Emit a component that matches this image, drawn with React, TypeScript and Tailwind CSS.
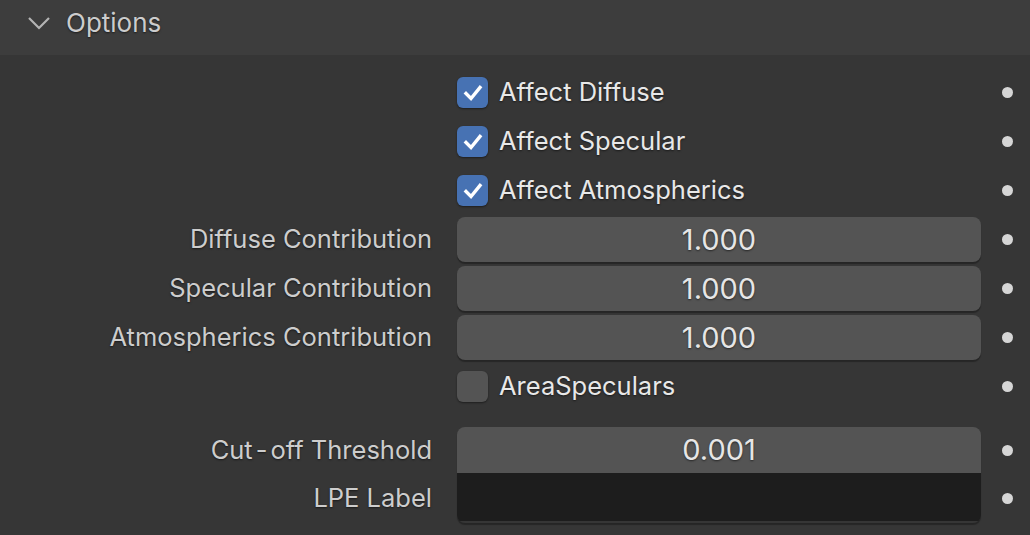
import React from "react";

const ts = "[text-shadow:0_1px_2px_rgba(0,0,0,0.55)]";

function Dot() {
  return (
    <div className="flex-1 flex items-center">
      <div className="ml-[21px] w-[11px] h-[11px] rounded-full bg-[#d6d6d6]" />
    </div>
  );
}

function CheckRow({ label, checked }: { label: string; checked: boolean }) {
  return (
    <div className="flex h-[49px] items-center">
      <div className="w-[432px]" />
      <div className="ml-[25px] w-[524px] flex items-center">
        <div
          className={
            checked
              ? "w-[31px] h-[31px] rounded-[6px] bg-[#4772b3] flex items-center justify-center shadow-[0_1px_2px_rgba(0,0,0,0.45)]"
              : "w-[31px] h-[31px] rounded-[6px] bg-[#545454] shadow-[0_1px_2px_rgba(0,0,0,0.45)]"
          }
        >
          {checked && (
            <svg width="22" height="22" viewBox="0 0 22 22">
              <path d="M4 11.5 L9 16.5 L18 5.5" fill="none" stroke="#ffffff" strokeWidth="3.4" strokeLinecap="square" strokeLinejoin="miter" />
            </svg>
          )}
        </div>
        <span className={`ml-[11px] text-[25.5px] text-[#e8e8e8] ${ts}`}>{label}</span>
      </div>
      <Dot />
    </div>
  );
}

function NumRow({ label, value }: { label: string; value: string }) {
  return (
    <div className="flex h-[49px] items-center">
      <div className={`w-[432px] text-right text-[25.5px] text-[#cdcdcd] ${ts}`}>{label}</div>
      <div className="ml-[25px] w-[524px] h-[45px] rounded-[8px] bg-[#545454] shadow-[0_2px_1px_rgba(0,0,0,0.3)] flex items-center justify-center">
        <span className={`text-[29px] text-[#e6e6e6] ${ts}`}>{value}</span>
      </div>
      <Dot />
    </div>
  );
}

export default function App() {
  return (
    <div
      className="w-[1030px] h-[535px] bg-[#363636] overflow-hidden"
      style={{ fontFamily: "Inter, 'Noto Sans', sans-serif" }}
    >
      <div className="h-[55px] pb-[10px] bg-[#3d3d3d] flex items-center">
        <svg className="ml-[27px]" width="24" height="14" viewBox="0 0 24 14">
          <path d="M2 2 L12 12 L22 2" fill="none" stroke="#b4b4b4" strokeWidth="2.2" />
        </svg>
        <span className={`ml-[15px] text-[26px] text-[#cccccc] ${ts}`}>Options</span>
      </div>
      <div className="pt-[13px]">
        <CheckRow label="Affect Diffuse" checked />
        <CheckRow label="Affect Specular" checked />
        <CheckRow label="Affect Atmospherics" checked />
        <NumRow label="Diffuse Contribution" value="1.000" />
        <NumRow label="Specular Contribution" value="1.000" />
        <NumRow label="Atmospherics Contribution" value="1.000" />
        <CheckRow label="AreaSpeculars" checked={false} />
        <div className="mt-[16px] flex">
          <div className="w-[432px] flex flex-col">
            <div className={`h-[46px] flex items-center justify-end text-[25.5px] text-[#cdcdcd] ${ts}`}>
              Cut<span className="mx-[3px]">-</span>off Threshold
            </div>
            <div className={`h-[50px] flex items-center justify-end text-[25.5px] text-[#cdcdcd] ${ts}`}>LPE Label</div>
          </div>
          <div className="ml-[25px] w-[524px] rounded-[8px] overflow-hidden shadow-[0_2px_1px_rgba(0,0,0,0.3)] flex flex-col">
            <div className="h-[46px] bg-[#545454] flex items-center justify-center">
              <span className={`text-[29px] text-[#e6e6e6] ${ts}`}>0.001</span>
            </div>
            <div className="h-[48px] bg-[#1d1d1d]" />
          </div>
          <div className="flex-1 flex flex-col">
            <div className="h-[46px] flex"><Dot /></div>
            <div className="h-[50px] flex"><Dot /></div>
          </div>
        </div>
      </div>
    </div>
  );
}
